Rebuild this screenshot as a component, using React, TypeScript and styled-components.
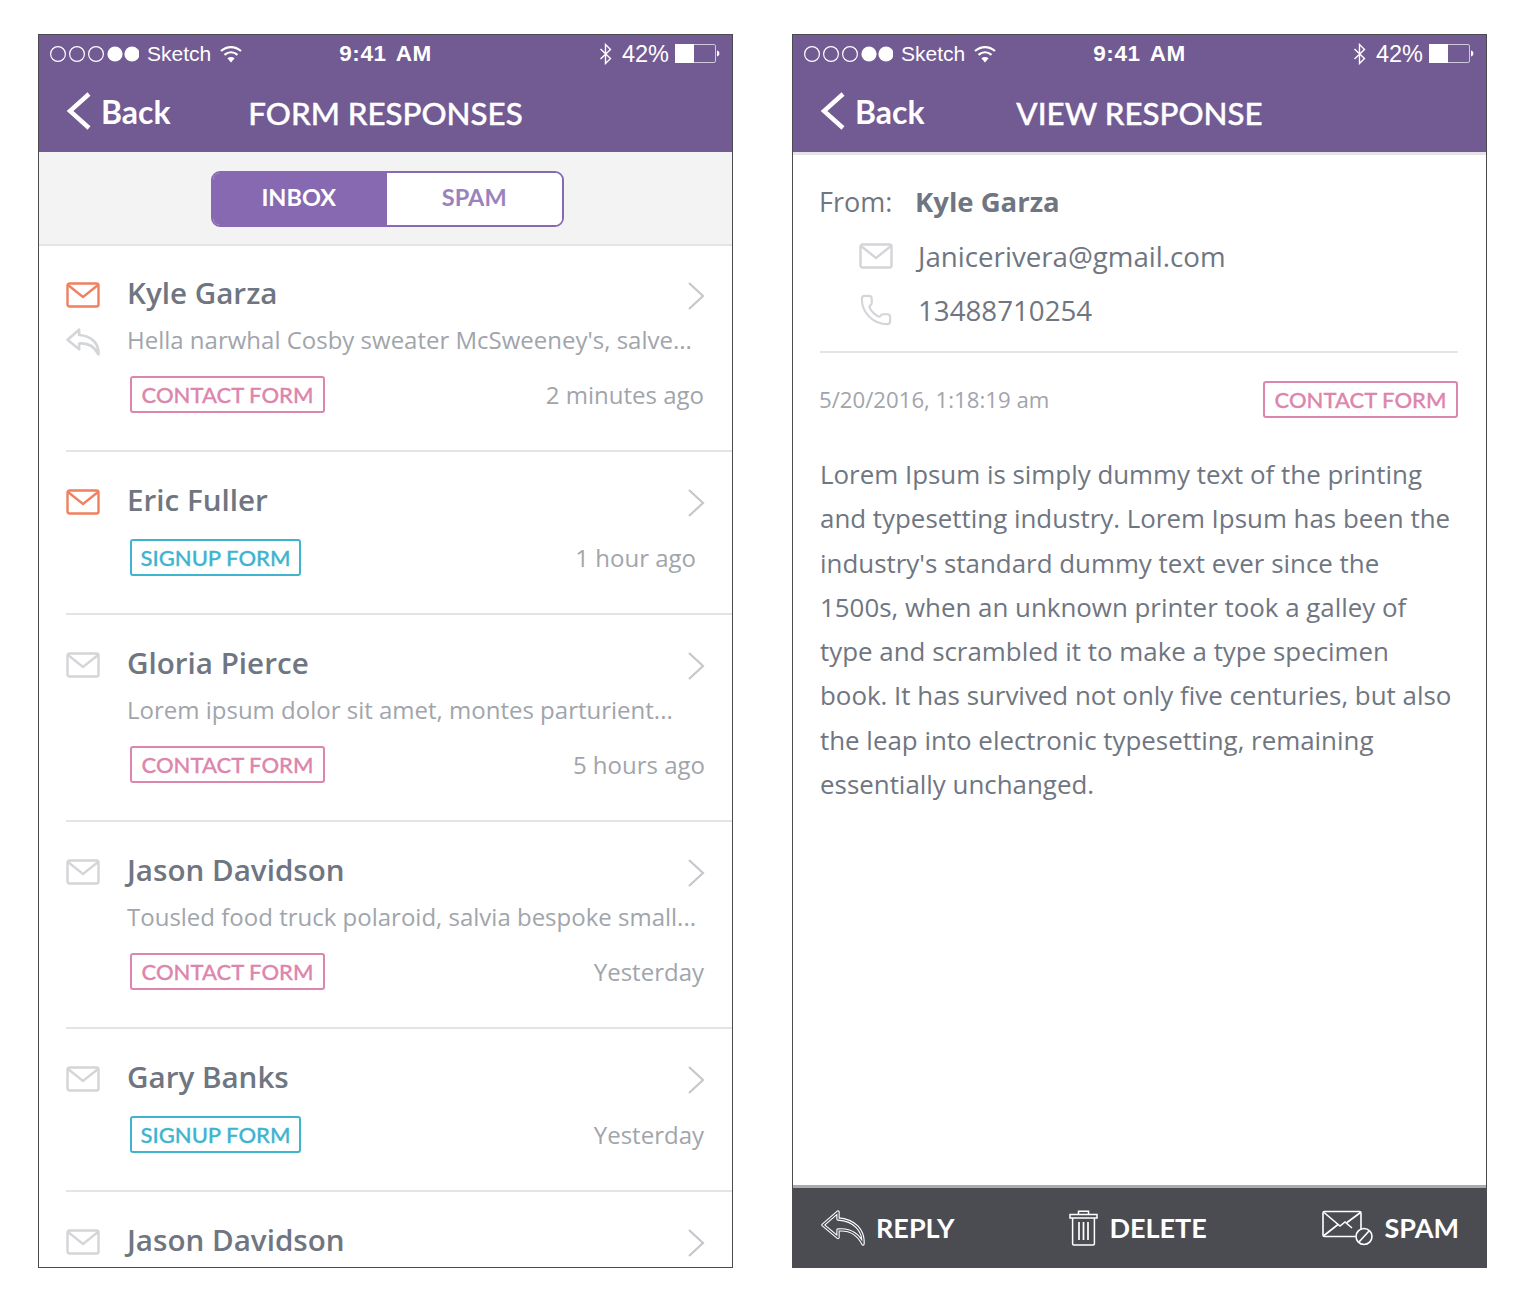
import React from 'react';
import styled, { createGlobalStyle } from 'styled-components';
import { Phone } from 'lucide-react';

const COLORS = {
  purple: '#725a93',
  segment: '#8669b0',
  name: '#6f7681',
  muted: '#a1a5ab',
  icon: '#d3d5d8',
  coral: '#f0805f',
  pink: '#dd86ad',
  cyan: '#3fb4cf',
  line: '#e4e4e6',
  footer: '#4a4c52',
};

type Message = {
  name: string;
  preview?: string;
  form: 'contact' | 'signup';
  time: string;
  timeInset: number;
  unread?: boolean;
  replied?: boolean;
  clipped?: boolean;
};

const messages: Message[] = [
  {
    name: 'Kyle Garza',
    preview: "Hella narwhal Cosby sweater McSweeney's, salve...",
    form: 'contact',
    time: '2 minutes ago',
    timeInset: 28,
    unread: true,
    replied: true,
  },
  { name: 'Eric Fuller', form: 'signup', time: '1 hour ago', timeInset: 36, unread: true },
  {
    name: 'Gloria Pierce',
    preview: 'Lorem ipsum dolor sit amet, montes parturient...',
    form: 'contact',
    time: '5 hours ago',
    timeInset: 27,
  },
  {
    name: 'Jason Davidson',
    preview: 'Tousled food truck polaroid, salvia bespoke small...',
    form: 'contact',
    time: 'Yesterday',
    timeInset: 28,
  },
  { name: 'Gary Banks', form: 'signup', time: 'Yesterday', timeInset: 28 },
  { name: 'Jason Davidson', form: 'contact', time: '', timeInset: 28, clipped: true },
];

const REPLY_PATH = 'M17 2L2 15l15 12.5V20c10-1 19 2 25 14 1-13-8-24-25-25z';

const MailIcon = ({ color }: { color: string }) => (
  <svg width="34" height="26" viewBox="0 0 34 26" fill="none" stroke={color} strokeWidth="2.4">
    <rect x="1.5" y="1.5" width="31" height="23" rx="2" />
    <path d="M2 3l15 12L32 3" />
  </svg>
);

const ListReplyIcon = () => (
  <svg width="34" height="28" viewBox="0 0 44 36" fill="none" stroke={COLORS.icon} strokeWidth="3.4" strokeLinejoin="round">
    <path d={REPLY_PATH} />
  </svg>
);

// white outline with a dark core, which gives the double line of the footer icon
const FooterReplyIcon = () => (
  <svg width="44" height="36" viewBox="0 0 44 36" fill="none" strokeLinejoin="round">
    <path d={REPLY_PATH} stroke="#fff" strokeWidth="3.4" />
    <path d={REPLY_PATH} stroke={COLORS.footer} strokeWidth="1.2" />
  </svg>
);

const ChevronRight = () => (
  <svg width="18" height="30" viewBox="0 0 18 30" fill="none" stroke="#c5c7cb" strokeWidth="2.2">
    <path d="M2 2l14 13L2 28" />
  </svg>
);

const WifiIcon = () => (
  <svg width="22" height="18" viewBox="0 0 22 18" fill="none" stroke="#fff" strokeWidth="2.2">
    <path d="M1 6c6-5.3 14-5.3 20 0" />
    <path d="M4.5 9.8c4-3.4 9-3.4 13 0" />
    <path d="M11 17.5l-3.6-4.2c2.2-1.6 5-1.6 7.2 0z" fill="#fff" stroke="none" />
  </svg>
);

const BluetoothIcon = () => (
  <svg width="13" height="22" viewBox="0 0 13 22" fill="none" stroke="#fff" strokeWidth="1.4">
    <path d="M1.5 6l10 9.5L6.5 20.5V1.5l5 5-10 9.5" />
  </svg>
);

const Dots = () => (
  <svg width="90" height="18" viewBox="0 0 90 18" fill="none" stroke="#fff" strokeWidth="1.2">
    <circle cx="9" cy="9" r="7.4" />
    <circle cx="28" cy="9" r="7.4" />
    <circle cx="47" cy="9" r="7.4" />
    <circle cx="66" cy="9" r="7.6" fill="#fff" stroke="none" />
    <circle cx="83" cy="9" r="7.6" fill="#fff" stroke="none" />
  </svg>
);

const Battery = () => (
  <svg width="45" height="20" viewBox="0 0 45 20" fill="none">
    <rect x="0.5" y="0.5" width="40" height="18" rx="1.5" stroke="#cfc7dc" />
    <rect x="0" y="0" width="19" height="19" fill="#fff" />
    <path d="M42 6.5c1.6.4 2.4 1.6 2.4 3s-.8 2.6-2.4 3z" fill="#fff" />
  </svg>
);

const TrashIcon = () => (
  <svg width="29" height="36" viewBox="0 0 29 36" fill="none" stroke="#fff" strokeWidth="1.5">
    <path d="M1 4.6h27V8H1zM9.5 4.6V1.2h10v3.4" />
    <path d="M3.6 8v25.8c0 .8.5 1.2 1.2 1.2h19.4c.7 0 1.2-.4 1.2-1.2V8" />
    <path d="M10 12v18M14.5 12v18M19 12v18" strokeWidth="1.7" />
  </svg>
);

const SpamIcon = () => (
  <svg width="52" height="36" viewBox="0 0 52 36" fill="none" stroke="#fff" strokeWidth="1.6">
    <path d="M39 20V3c0-.8-.5-1.5-1.500-1.500h-35C1.500 1.500 1 2.200 1 3v22c0 .8.500 1.500 1.500 1.500h31" />
    <path d="M2 2.500l16 13.500 5-4 7 6M38.500 2.500L25 12.500M2 25.500l14-11" />
    <circle cx="42" cy="26.500" r="8" />
    <path d="M37 32l10-11" />
  </svg>
);

const StatusBar = () => (
  <StatusRow>
    <StatusSide>
      <Dots />
      <Carrier>Sketch</Carrier>
      <WifiIcon />
    </StatusSide>
    <Clock>9:41 AM</Clock>
    <StatusSide $end>
      <BluetoothIcon />
      <Percent>42%</Percent>
      <Battery />
    </StatusSide>
  </StatusRow>
);

const TopBar = ({ title }: { title: string }) => (
  <Header>
    <StatusBar />
    <NavRow>
      <BackLink>
        <svg width="26" height="38" viewBox="0 0 26 38" fill="none" stroke="#fff" strokeWidth="4.4">
          <path d="M23 2L4 19l19 17" />
        </svg>
        <BackLabel>Back</BackLabel>
      </BackLink>
      <NavTitle>{title}</NavTitle>
    </NavRow>
  </Header>
);

const FormTag = ({ kind }: { kind: 'contact' | 'signup' }) => (
  <Tag $kind={kind}>{kind === 'contact' ? 'CONTACT FORM' : 'SIGNUP FORM'}</Tag>
);

const MessageRow = ({ message }: { message: Message }) => (
  <Row $clipped={message.clipped}>
    <IconColumn>
      <MailIcon color={message.unread ? COLORS.coral : COLORS.icon} />
      {message.replied && (
        <ReplySlot>
          <ListReplyIcon />
        </ReplySlot>
      )}
    </IconColumn>
    <RowBody>
      <NameRow>
        <Name>{message.name}</Name>
        <ChevronSlot>
          <ChevronRight />
        </ChevronSlot>
      </NameRow>
      {message.preview && <Preview>{message.preview}</Preview>}
      {!message.clipped && (
        <MetaRow $compact={!message.preview}>
          <FormTag kind={message.form} />
          <Time $inset={message.timeInset}>{message.time}</Time>
        </MetaRow>
      )}
    </RowBody>
  </Row>
);

export default function App() {
  return (
    <Page>
      <GlobalStyle />
      <PhoneFrame>
        <TopBar title="FORM RESPONSES" />
        <Toolbar>
          <Segmented>
            <SegmentButton $active>INBOX</SegmentButton>
            <SegmentButton>SPAM</SegmentButton>
          </Segmented>
        </Toolbar>
        <List>
          {messages.map((message, index) => (
            <MessageRow key={index} message={message} />
          ))}
        </List>
      </PhoneFrame>

      <PhoneFrame>
        <TopBar title="VIEW RESPONSE" />
        <Detail>
          <Sender>
            <FromRow>
              <FromLabel>From:</FromLabel>
              <FromName>Kyle Garza</FromName>
            </FromRow>
            <ContactRow>
              <ContactIcon>
                <MailIcon color={COLORS.icon} />
              </ContactIcon>
              Janicerivera@gmail.com
            </ContactRow>
            <ContactRow>
              <ContactIcon>
                <Phone size={34} color={COLORS.icon} strokeWidth={1.5} />
              </ContactIcon>
              13488710254
            </ContactRow>
          </Sender>
          <DateRow>
            <DateText>5/20/2016, 1:18:19 am</DateText>
            <FormTag kind="contact" />
          </DateRow>
          <Body>
            Lorem Ipsum is simply dummy text of the printing and typesetting industry. Lorem Ipsum has been
            the industry's standard dummy text ever since the 1500s, when an unknown printer took a galley of
            type and scrambled it to make a type specimen book. It has survived not only five centuries, but
            also the leap into electronic typesetting, remaining essentially unchanged.
          </Body>
        </Detail>
        <Footer>
          <FooterAction>
            <FooterReplyIcon />
            REPLY
          </FooterAction>
          <FooterAction>
            <TrashIcon />
            DELETE
          </FooterAction>
          <FooterAction>
            <SpamIcon />
            SPAM
          </FooterAction>
        </Footer>
      </PhoneFrame>
    </Page>
  );
}

const GlobalStyle = createGlobalStyle`
  body {
    margin: 0;
    background: #fff;
    font-family: "Open Sans", sans-serif;
  }
`;

const Page = styled.div`
  display: flex;
  gap: 59px;
  width: 1526px;
  height: 1300px;
  padding: 34px 0 0 38px;
  box-sizing: border-box;
`;

const PhoneFrame = styled.section`
  display: flex;
  flex-direction: column;
  width: 695px;
  height: 1234px;
  box-sizing: border-box;
  border: 1px solid #4b4b4f;
  overflow: hidden;
  background: #fff;
`;

const Header = styled.header`
  flex: none;
  height: 117px;
  background: ${COLORS.purple};
  color: #fff;
`;

const StatusRow = styled.div`
  display: flex;
  align-items: center;
  justify-content: space-between;
  height: 38px;
  padding: 0 12px 0 10px;
  font-family: "Liberation Sans", sans-serif;
`;

const StatusSide = styled.div<{ $end?: boolean }>`
  display: flex;
  flex: 1;
  align-items: center;
  justify-content: ${(p) => (p.$end ? 'flex-end' : 'flex-start')};
  gap: ${(p) => (p.$end ? '10px' : '8px')};
`;

const Carrier = styled.span`
  font-size: 21px;
  margin-right: 1px;
`;

const Clock = styled.span`
  margin-left: 2px;
  font-size: 22.5px;
  font-weight: 700;
  letter-spacing: 0.6px;
  white-space: pre;
  word-spacing: 3px;
`;

const Percent = styled.span`
  font-size: 23.5px;
  margin-right: -4px;
`;

const NavRow = styled.div`
  display: grid;
  grid-template-columns: 1fr auto 1fr;
  align-items: center;
  height: 79px;
  padding-left: 27px;
  font-family: Lato, sans-serif;
`;

const BackLink = styled.div`
  display: flex;
  align-items: center;
  gap: 9px;
  margin-top: -4px;
`;

const BackLabel = styled.span`
  margin-top: 2px;
  font-size: 32px;
  font-weight: 700;
`;

const NavTitle = styled.h1`
  margin: 0 0 0 -27px;
  font-size: 31.3px;
  font-weight: 500;
  -webkit-text-stroke: 0.4px #fff;
`;

const Toolbar = styled.div`
  display: flex;
  flex: none;
  justify-content: center;
  align-items: center;
  height: 94px;
  padding: 1px 0 0 3px;
  box-sizing: border-box;
  background: #f3f3f4;
  border-bottom: 2px solid ${COLORS.line};
`;

const Segmented = styled.div`
  display: flex;
  width: 353px;
  height: 56px;
  box-sizing: border-box;
  border: 2px solid ${COLORS.segment};
  border-radius: 9px;
  overflow: hidden;
  background: #fff;
`;

const SegmentButton = styled.div<{ $active?: boolean }>`
  display: flex;
  flex: 0 0 50%;
  align-items: center;
  justify-content: center;
  box-sizing: border-box;
  padding: 0 ${(p) => (p.$active ? '2px' : '0')} 3px 0;
  font-family: Lato, sans-serif;
  font-size: 23.5px;
  font-weight: 700;
  color: ${(p) => (p.$active ? '#fff' : '#9a83bd')};
  background: ${(p) => (p.$active ? COLORS.segment : '#fff')};
`;

const List = styled.div`
  flex: 1;
  min-height: 0;
  overflow: hidden;
`;

const Row = styled.article<{ $clipped?: boolean }>`
  display: flex;
  margin-left: 27px;
  padding: 27px 0 37px;
  border-bottom: ${(p) => (p.$clipped ? 'none' : `2px solid ${COLORS.line}`)};

  &:first-child {
    padding-top: 26px;
  }
`;

const IconColumn = styled.div`
  display: flex;
  flex: none;
  flex-direction: column;
  width: 61px;
  padding-top: 10px;
`;

const ReplySlot = styled.div`
  margin-top: 20px;
`;

const RowBody = styled.div`
  display: flex;
  flex: 1;
  flex-direction: column;
`;

const NameRow = styled.div`
  display: flex;
  align-items: center;
  justify-content: space-between;
  height: 40px;
  padding-right: 27px;
`;

const ChevronSlot = styled.span`
  display: flex;
  margin-top: 8px;
`;

const Name = styled.div`
  font-size: 29.6px;
  font-weight: 600;
  color: ${COLORS.name};
`;

const Preview = styled.div`
  margin-top: 8px;
  font-size: 24px;
  line-height: 40px;
  color: ${COLORS.muted};
  white-space: nowrap;
`;

const MetaRow = styled.div<{ $compact?: boolean }>`
  display: flex;
  align-items: center;
  justify-content: space-between;
  margin-top: ${(p) => (p.$compact ? '20px' : '16px')};
`;

const Tag = styled.span<{ $kind: 'contact' | 'signup' }>`
  display: inline-flex;
  align-items: center;
  justify-content: center;
  width: ${(p) => (p.$kind === 'contact' ? '195px' : '171px')};
  height: 37px;
  box-sizing: border-box;
  margin-left: 3px;
  border: 2px solid ${(p) => (p.$kind === 'contact' ? COLORS.pink : COLORS.cyan)};
  border-radius: 3px;
  font-family: Lato, sans-serif;
  font-size: 22px;
  font-weight: 500;
  -webkit-text-stroke: 0.3px ${(p) => (p.$kind === 'contact' ? COLORS.pink : COLORS.cyan)};
  color: ${(p) => (p.$kind === 'contact' ? COLORS.pink : COLORS.cyan)};
`;

const Time = styled.span<{ $inset: number }>`
  margin-right: ${(p) => p.$inset}px;
  font-size: 24px;
  color: ${COLORS.muted};
`;

const Detail = styled.div`
  flex: 1;
  min-height: 0;
  padding: 0 28px 0 27px;
  border-top: 3px solid ${COLORS.line};
`;

const Sender = styled.div`
  display: flex;
  flex-direction: column;
  padding-bottom: 7px;
  border-bottom: 2px solid ${COLORS.line};
`;

const FromRow = styled.div`
  display: flex;
  align-items: center;
  height: 40px;
  margin: 26px 0 15px -1px;
  font-size: 27px;
  color: ${COLORS.name};
`;

const FromLabel = styled.span`
  width: 96px;
`;

const FromName = styled.span`
  font-size: 27.5px;
  font-weight: 700;
`;

const ContactRow = styled.div`
  display: flex;
  align-items: center;
  height: 40px;
  margin-bottom: 14px;
  font-size: 27.7px;
  color: ${COLORS.name};
`;

const ContactIcon = styled.span`
  display: flex;
  width: 98px;
  padding-left: 39px;
  box-sizing: border-box;
`;

const DateRow = styled.div`
  display: flex;
  align-items: center;
  justify-content: space-between;
  margin-top: 28px;
`;

const DateText = styled.span`
  margin-left: -1px;
  font-size: 22.2px;
  color: ${COLORS.muted};
`;

const Body = styled.p`
  margin: 34px 0 0;
  font-size: 25.9px;
  line-height: 44.3px;
  color: ${COLORS.name};
`;

const Footer = styled.footer`
  display: flex;
  flex: none;
  align-items: center;
  justify-content: space-between;
  height: 82px;
  padding: 0 27px 0 28px;
  box-sizing: border-box;
  background: ${COLORS.footer};
  border-top: 3px solid #a9abaf;
`;

const FooterAction = styled.div`
  display: flex;
  align-items: center;
  gap: 11px;
  font-family: Lato, sans-serif;
  font-size: 27px;
  font-weight: 700;
  color: #fff;
`;
